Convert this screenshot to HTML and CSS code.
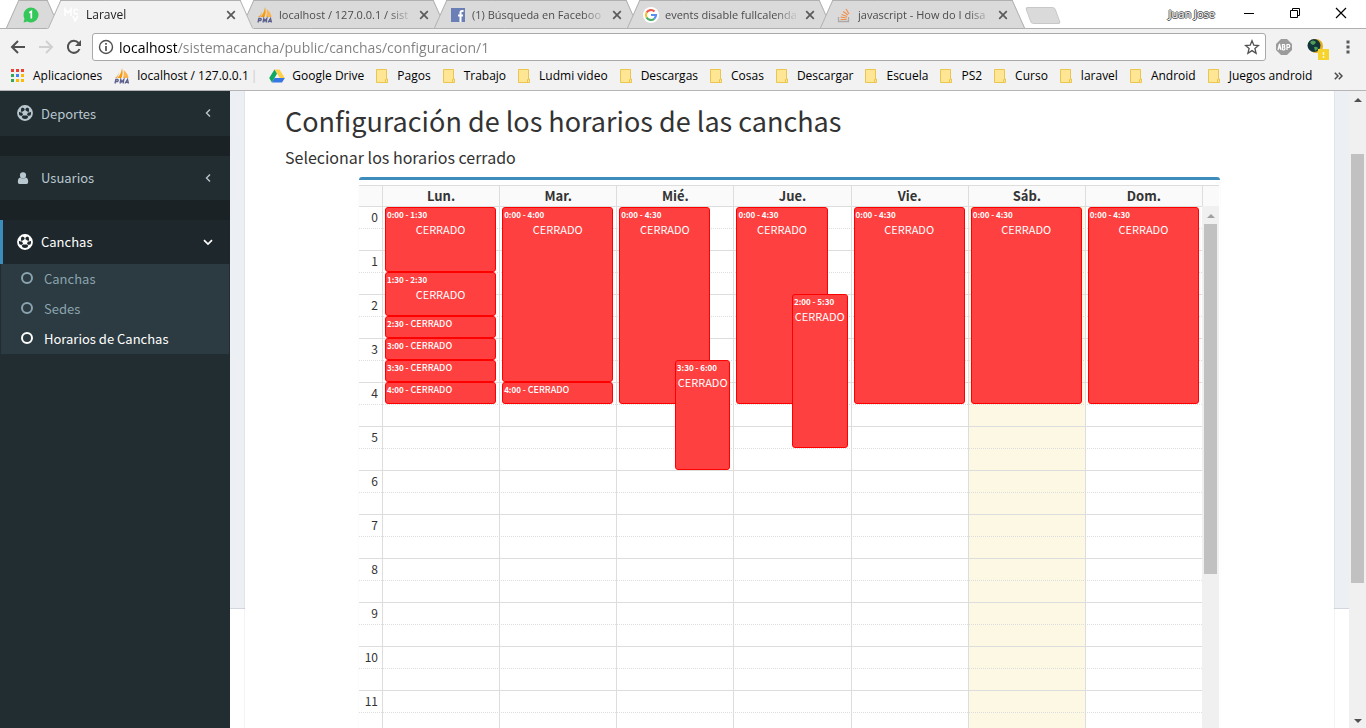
FILE: index.html
```html
<!DOCTYPE html>
<html lang="es">
<head>
<meta charset="utf-8">
<title>Laravel</title>
<link rel="stylesheet" href="styles.css">
</head>
<body>
<svg class="defs" aria-hidden="true">
  <symbol id="ball" viewBox="0 0 16 16">
    <circle cx="8" cy="8" r="7" fill="none" stroke="currentColor" stroke-width="1.800"/>
    <path fill="currentColor" d="M8 5l3 2.100-1.200 3.500H6.200L5 7.100zM4.500 1.500L8 4l3.500-2.500L8 .6zM1 6.500L3.700 7.400l.5-4L2.600 3zM15 6.500l-2.700.9-.5-4L13.400 3zM1.200 10.500l3.300.3 1.300 3.400-1.800.3zM14.800 10.500l-3.300.3-1.300 3.400 1.800.3z"/>
    <path stroke="currentColor" stroke-width=".8" d="M8 3v3M3.300 6.800l2.500.6M12.700 6.800l-2.500.6M4.300 11.500l2-1.500M11.700 11.500l-2-1.500"/>
  </symbol>
  <symbol id="x" viewBox="0 0 10 10"><path d="M1.200 1.200l7.600 7.600M8.800 1.200L1.200 8.800" stroke="#5a5a5a" stroke-width="1.700"/></symbol>
  <symbol id="pma" viewBox="0 0 16 16">
    <path fill="#f89c0e" d="M8 0c1 4 .8 7-.5 10H3.500C6 7 7.500 4 8 0z"/><path fill="#fbb450" d="M9.500 2c3 2 4.800 5 5 8H9c1-3 1-5 .5-8z"/><path fill="#e9a04c" d="M4.500 4C4.500 7 3 9 .8 10H3c1-1.500 1.800-3.500 1.500-6z"/>
    <path d="M1 15.500l.8-4h2q1 1-.2 2H1.500M6 15.500l.8-4 1 2.500 2-2.500-.6 4M11 15.500l2.500-4 1 4M12 14.300h2" fill="none" stroke="#5b5f8d" stroke-width="1.300"/>
  </symbol>
  <symbol id="folder" viewBox="0 0 12 14"><path d="M.5.500h10v9.500h1v3.500H.5z" fill="#ffe694" stroke="#eac54f"/><path d="M9.500 13.500v-3h1" fill="none" stroke="#eac54f"/></symbol>
</svg>

<header class="browser">
  <div class="tabstrip">
    <button class="tab tab-pinned" aria-label="WhatsApp">
      <svg class="fav" viewBox="0 0 16 16"><path fill="#34c759" d="M8 .5a7.500 7.500 0 1 1-3.600 14.100L.5 15.500l1-3.800A7.500 7.500 0 0 1 8 .5z"/><path d="M6.300 5.800L8.300 4.500V11.500" fill="none" stroke="#fff" stroke-width="1.700"/></svg>
    </button>
    <button class="tab tab-active">
      <svg class="fav" viewBox="0 0 16 16"><path d="M1 9V2l3 4 3-4v7M14 3q-4-2-4 1.500t4 2M9 9l2 5 3-5" fill="none" stroke="#fff" stroke-width="1.500"/></svg>
      <span class="tab-title">Laravel</span><svg class="close"><use href="#x"/></svg>
    </button>
    <button class="tab">
      <svg class="fav"><use href="#pma"/></svg>
      <span class="tab-title">localhost / 127.0.0.1 / sist</span><svg class="close"><use href="#x"/></svg>
    </button>
    <button class="tab">
      <svg class="fav" viewBox="0 0 16 16"><path fill="#6a7fb5" d="M1 1h14v14H1z"/><path d="M13.500 4H12q-1.500 0-1.500 1.500V15M8 8.500h5" fill="none" stroke="#fff" stroke-width="2"/></svg>
      <span class="tab-title">(1) Búsqueda en Faceboo</span><svg class="close"><use href="#x"/></svg>
    </button>
    <button class="tab">
      <svg class="fav" viewBox="0 0 16 16"><circle cx="8" cy="8" r="8" fill="#fff"/><g fill="none" stroke-width="2.200"><path stroke="#ea5a4d" d="M3.600 5.500A5 5 0 0 1 11.500 4.500"/><path stroke="#f6c033" d="M3.600 5.500a5 5 0 0 0 0 5"/><path stroke="#4cae68" d="M3.600 10.500a5 5 0 0 0 7.700 1.200"/><path stroke="#5b8ff0" d="M11.300 11.700A5 5 0 0 0 13 8H8"/></g></svg>
      <span class="tab-title">events disable fullcalenda</span><svg class="close"><use href="#x"/></svg>
    </button>
    <button class="tab">
      <svg class="fav" viewBox="0 0 16 16"><path d="M2.500 10v4.500h10V10" fill="none" stroke="#aaa" stroke-width="1.300"/><path d="M4.500 12.500h6M4.700 10.200l6 .8M5.500 7.500l5.600 2M7.200 4.500l4.700 3.600M10 2l3 5" stroke="#f2904c" stroke-width="1.200"/></svg>
      <span class="tab-title">javascript - How do I disa</span><svg class="close"><use href="#x"/></svg>
    </button>
    <button class="new-tab" aria-label="Nueva pestaña"></button>
    <div class="window-controls">
      <span class="profile">Juan Jose</span>
      <button aria-label="Minimizar"><svg viewBox="0 0 12 12"><path d="M1 6.500h10" stroke="#000"/></svg></button>
      <button aria-label="Restaurar"><svg viewBox="0 0 12 12"><path d="M1.500 3.500h7v7h-7zM3.500 3V1.500h7v7H9" fill="none" stroke="#000"/></svg></button>
      <button aria-label="Cerrar"><svg viewBox="0 0 12 12"><path d="M1 1l10 10M11 1L1 11" stroke="#000" stroke-width="1.200"/></svg></button>
    </div>
  </div>
  <div class="toolbar">
    <button class="tool" aria-label="Atrás"><svg viewBox="0 0 16 16"><path d="M15 8H2M8 2L2 8l6 6" fill="none" stroke="#505050" stroke-width="2"/></svg></button>
    <button class="tool" aria-label="Adelante"><svg viewBox="0 0 16 16"><path d="M1 8h13M8 2l6 6-6 6" fill="none" stroke="#d0d0d0" stroke-width="2"/></svg></button>
    <button class="tool" aria-label="Recargar"><svg viewBox="0 0 16 16"><path d="M13.500 10A6 6 0 1 1 12.500 4" fill="none" stroke="#505050" stroke-width="2"/><path d="M15 1v6H9z" fill="#505050"/></svg></button>
    <div class="omnibox">
      <svg viewBox="0 0 16 16"><circle cx="8" cy="8" r="6.500" fill="none" stroke="#505050" stroke-width="1.400"/><path d="M8 7v5M8 4v1.800" stroke="#505050" stroke-width="1.700"/></svg>
      <input class="url" type="text" aria-label="Dirección" value="localhost/sistemacancha/public/canchas/configuracion/1">
      <svg viewBox="0 0 16 16"><path d="M8 1.800l1.800 4.400 4.700.3-3.600 3 1.200 4.700L8 11.600l-4.100 2.600 1.200-4.700-3.600-3 4.700-.3z" fill="none" stroke="#505050" stroke-width="1.300"/></svg>
    </div>
    <button class="ext" aria-label="ABP"><svg viewBox="0 0 18 18"><path d="M6 1h6l5 5v6l-5 5H6l-5-5V6z" fill="#9b9b9b"/><path d="M3 12l1.500-6L6 12M3.500 10h2M7.500 12V6.500h1.500q1.500 1.200 0 2.500 2 1.500 0 3H7.500M12 12V6.500h2q1.500 1.500 0 3h-2" fill="none" stroke="#fff" stroke-width="1.200"/></svg></button>
    <button class="ext ext-wide" aria-label="Descargas"><svg viewBox="0 0 22 22"><circle cx="9" cy="8" r="7" fill="#e3ad1f"/><circle cx="7" cy="7.500" r="6.500" fill="#12343b"/><path d="M3 4q3-3 6 0-1 3-3 3t-3-3zM7 9q4-1 4 2l-3 2z" fill="#4e9b54"/><path d="M11 11h11v11H11z" fill="#f6d32d"/><path d="M16.500 14v3M16.500 18v2" stroke="#fff6c9" stroke-width="1.500"/></svg></button>
    <button class="menu" aria-label="Menú"><svg viewBox="0 0 4 14"><path d="M.5.500h3v3h-3zM.5 5.500h3v3h-3zM.5 10.500h3v3h-3z" fill="#5a5a5a"/></svg></button>
  </div>
  <nav class="bookmarks">
    <a href="#"><svg class="apps" viewBox="0 0 13 13"><path fill="#ea4335" d="M0 0h3v3H0zM5 0h3v3H5zM10 0h3v3h-3z"/><path fill="#34a853" d="M0 5h3v3H0zM0 10h3v3H0z"/><path fill="#4285f4" d="M5 5h3v3H5z"/><path fill="#fbbc05" d="M10 5h3v3h-3zM5 10h3v3H5zM10 10h3v3h-3z"/></svg>Aplicaciones</a>
    <a class="tight" href="#"><svg class="site"><use href="#pma"/></svg>localhost / 127.0.0.1<span class="cut">|</span></a>
    <a class="tight" href="#"><svg class="site" viewBox="0 0 16 16"><path fill="#ffcf48" d="M5.500 1.500h5L15.800 10h-5z"/><path fill="#11a861" d="M5.500 1.500L8 5.700 2.900 14.500.2 10z"/><path fill="#3777e3" d="M5.500 10h10.300L13 14.500H2.900z"/></svg>Google Drive</a>
    <a href="#"><svg class="folder"><use href="#folder"/></svg>Pagos</a>
    <a href="#"><svg class="folder"><use href="#folder"/></svg>Trabajo</a>
    <a href="#"><svg class="folder"><use href="#folder"/></svg>Ludmi video</a>
    <a href="#"><svg class="folder"><use href="#folder"/></svg>Descargas</a>
    <a href="#"><svg class="folder"><use href="#folder"/></svg>Cosas</a>
    <a href="#"><svg class="folder"><use href="#folder"/></svg>Descargar</a>
    <a href="#"><svg class="folder"><use href="#folder"/></svg>Escuela</a>
    <a href="#"><svg class="folder"><use href="#folder"/></svg>PS2</a>
    <a href="#"><svg class="folder"><use href="#folder"/></svg>Curso</a>
    <a href="#"><svg class="folder"><use href="#folder"/></svg>laravel</a>
    <a href="#"><svg class="folder"><use href="#folder"/></svg>Android</a>
    <a href="#"><svg class="folder"><use href="#folder"/></svg>Juegos android</a>
    <button class="more" aria-label="Más marcadores"><svg viewBox="0 0 9 8"><path d="M.8.800L4 4 .8 7.200M4.800.800L8 4 4.800 7.200" fill="none" stroke="#4a4a4a" stroke-width="1.500"/></svg></button>
  </nav>
</header>

<div class="page">
  <aside class="sidebar">
    <ul class="nav">
      <li><a class="nav-link" href="#"><svg class="nav-icon"><use href="#ball"/></svg>Deportes<svg class="arrow" viewBox="0 0 8 10"><path d="M6 1.500L2.500 5 6 8.500" fill="none" stroke="currentColor" stroke-width="1.400"/></svg></a></li>
      <li class="spacer"></li>
      <li><a class="nav-link" href="#"><svg class="nav-icon" viewBox="0 0 16 16"><path fill="currentColor" d="M6 2.200a3 3 0 0 1 0 6.200 3 3 0 0 1 0-6.200zM3.300 7.500q2.700 2.400 5.400 0 2.500.3 2.500 4.500 0 2-1.700 2h-7Q.8 14 .8 12q0-4.200 2.500-4.500z"/></svg>Usuarios<svg class="arrow" viewBox="0 0 8 10"><path d="M6 1.500L2.500 5 6 8.500" fill="none" stroke="currentColor" stroke-width="1.400"/></svg></a></li>
      <li class="spacer"></li>
      <li>
        <a class="nav-link nav-active" href="#"><svg class="nav-icon"><use href="#ball"/></svg>Canchas<svg class="arrow" viewBox="0 0 10 10"><path d="M1 3.200L5 7l4-3.800" fill="none" stroke="currentColor" stroke-width="1.700"/></svg></a>
        <ul class="subnav">
          <li><a href="#"><i class="ring"></i>Canchas</a></li>
          <li><a href="#"><i class="ring"></i>Sedes</a></li>
          <li><a class="current" href="#"><i class="ring"></i>Horarios de Canchas</a></li>
        </ul>
      </li>
    </ul>
  </aside>

  <main class="content">
    <section class="panel">
      <h1>Configuración de los horarios de las canchas</h1>
      <h2>Selecionar los horarios cerrado</h2>
      <div class="calendar">
        <table class="head">
          <tr><th class="axis"></th><th>Lun.</th><th>Mar.</th><th>Mié.</th><th>Jue.</th><th>Vie.</th><th>Sáb.</th><th>Dom.</th><th class="gutter"></th></tr>
        </table>
        <div class="body">
          <div class="grid">
            <table class="slots">
              <tr><th>0</th><td></td></tr><tr><th></th><td></td></tr>
              <tr><th>1</th><td></td></tr><tr><th></th><td></td></tr>
              <tr><th>2</th><td></td></tr><tr><th></th><td></td></tr>
              <tr><th>3</th><td></td></tr><tr><th></th><td></td></tr>
              <tr><th>4</th><td></td></tr><tr><th></th><td></td></tr>
              <tr><th>5</th><td></td></tr><tr><th></th><td></td></tr>
              <tr><th>6</th><td></td></tr><tr><th></th><td></td></tr>
              <tr><th>7</th><td></td></tr><tr><th></th><td></td></tr>
              <tr><th>8</th><td></td></tr><tr><th></th><td></td></tr>
              <tr><th>9</th><td></td></tr><tr><th></th><td></td></tr>
              <tr><th>10</th><td></td></tr><tr><th></th><td></td></tr>
              <tr><th>11</th><td></td></tr><tr><th></th><td></td></tr>
            </table>
            <div class="days">
              <div class="day">
                <a class="event" style="grid-row:1/4"><span>0:00 - 1:30</span><b>CERRADO</b></a>
                <a class="event" style="grid-row:4/6"><span>1:30 - 2:30</span><b>CERRADO</b></a>
                <a class="event short" style="grid-row:6/7"><span>2:30 - </span><b>CERRADO</b></a>
                <a class="event short" style="grid-row:7/8"><span>3:00 - </span><b>CERRADO</b></a>
                <a class="event short" style="grid-row:8/9"><span>3:30 - </span><b>CERRADO</b></a>
                <a class="event short" style="grid-row:9/10"><span>4:00 - </span><b>CERRADO</b></a>
              </div>
              <div class="day">
                <a class="event" style="grid-row:1/9"><span>0:00 - 4:00</span><b>CERRADO</b></a>
                <a class="event short" style="grid-row:9/10"><span>4:00 - </span><b>CERRADO</b></a>
              </div>
              <div class="day">
                <a class="event under" style="grid-row:1/10"><span>0:00 - 4:30</span><b>CERRADO</b></a>
                <a class="event over" style="grid-row:8/13"><span>3:30 - 6:00</span><b>CERRADO</b></a>
              </div>
              <div class="day">
                <a class="event under" style="grid-row:1/10"><span>0:00 - 4:30</span><b>CERRADO</b></a>
                <a class="event over" style="grid-row:5/12"><span>2:00 - 5:30</span><b>CERRADO</b></a>
              </div>
              <div class="day"><a class="event" style="grid-row:1/10"><span>0:00 - 4:30</span><b>CERRADO</b></a></div>
              <div class="day today"><a class="event" style="grid-row:1/10"><span>0:00 - 4:30</span><b>CERRADO</b></a></div>
              <div class="day"><a class="event" style="grid-row:1/10"><span>0:00 - 4:30</span><b>CERRADO</b></a></div>
            </div>
          </div>
          <div class="scrollbar scrollbar-inner"><i class="up"></i><i class="thumb"></i></div>
        </div>
      </div>
    </section>
  </main>
  <div class="scrollbar scrollbar-page"><i class="up"></i><i class="thumb"></i><i class="down"></i></div>
</div>
</body>
</html>
```
FILE: styles.css
```css
* { box-sizing: border-box; }
body { margin: 0; height: 100vh; display: flex; flex-direction: column; overflow: hidden; background: #fff; font-family: "Noto Sans CJK SC", "Noto Sans", sans-serif; font-size: 13px; color: #333; }
button { border: 0; padding: 0; background: none; font: inherit; color: inherit; }
a { color: inherit; text-decoration: none; }
ul { list-style: none; margin: 0; padding: 0; }
.defs { position: absolute; width: 0; height: 0; }

/* Browser frame */
.browser { flex: none; background: #f2f2f2; border-bottom: 1px solid #b6b4b6; font-family: "Open Sans", "Noto Sans", sans-serif; font-size: 12px; color: #000; }
.tabstrip { display: flex; height: 29px; padding-left: 12px; background: #fff; border-bottom: 1px solid #b0b0b0; }
.tab { position: relative; z-index: 0; flex: 0 1 193px; min-width: 0; height: 29px; display: flex; align-items: center; padding: 0 11px 0 10px; font-size: 11px; color: #4c4c4c; text-align: left; }
.tab::before, .tab::after { content: ""; position: absolute; z-index: -1; top: 0; bottom: 0; background: #dadada; border-top: 1px solid #b0b0b0; border-bottom: 1px solid #b0b0b0; }
.tab::before { left: 0; right: 30%; border-left: 1px solid #b0b0b0; transform: skewX(-24deg); }
.tab::after { left: 30%; right: 0; border-right: 1px solid #b0b0b0; transform: skewX(24deg); }
.tab-pinned { flex-basis: 42px; padding-left: 11px; }
.tab-active { z-index: 1; font-size: 12px; color: #222; }
.tab-active::before, .tab-active::after { background: #f2f2f2; border-bottom-color: #f2f2f2; }
.fav { flex: none; width: 16px; height: 16px; margin-right: 6px; }
.tab-title { flex: 1; min-width: 0; white-space: nowrap; -webkit-mask-image: linear-gradient(to left, transparent, #000 24px); mask-image: linear-gradient(to left, transparent, #000 24px); }
.close { flex: none; width: 10px; height: 10px; margin-left: 6px; }
.new-tab { width: 30px; height: 17px; margin: 7px 0 0 9px; background: #dadada; border: 1px solid #c8c8c8; border-radius: 3px; transform: skewX(20deg); }
.window-controls { margin-left: auto; display: flex; align-items: center; gap: 34px; padding: 0 19px 2px 0; }
.window-controls svg { display: block; width: 12px; height: 12px; }
.profile { font-size: 11px; color: #fff; text-shadow: 1px 0 #555, -1px 0 #555, 0 1px #555, 0 -1px #555; margin-right: -6px; }
.toolbar { display: flex; align-items: center; height: 36px; padding: 0 10px; }
.tool { flex: none; width: 28px; height: 28px; }
.tool svg { display: block; width: 16px; height: 16px; }
.omnibox { flex: 1; display: flex; align-items: center; height: 28px; padding: 0 5px; margin-left: -2px; background: #fff; border: 1px solid #a9a9a9; border-radius: 3px; }
.omnibox svg { flex: none; width: 16px; height: 16px; }
.url { flex: 1; border: 0; outline: 0; padding: 0 5px; font: 14px "Open Sans", sans-serif; -webkit-text-fill-color: transparent; background: linear-gradient(90deg, #000 63px, #808080 63px); -webkit-background-clip: text; background-clip: text; }
.ext { flex: none; width: 18px; height: 18px; margin-left: 9px; }
.ext svg { display: block; width: 100%; height: 100%; }
.ext-wide { width: 22px; height: 22px; margin: 4px 0 0 14px; }
.menu { flex: none; width: 4px; height: 14px; margin: 0 6px 0 17px; }
.menu svg { display: block; width: 4px; height: 14px; }
.bookmarks { display: flex; align-items: center; height: 25px; padding: 0 23px 4px 11px; gap: 12px; white-space: nowrap; overflow: hidden; }
.bookmarks a { display: flex; align-items: center; gap: 9px; }
.bookmarks .tight { gap: 7px; }
.apps { width: 13px; height: 13px; }
.site { width: 16px; height: 16px; }
.folder { width: 12px; height: 14px; }
.cut { color: #ccc; margin-left: -5px; }
.more { margin-left: auto; }
.more svg { display: block; width: 9px; height: 8px; }

/* Application */
.page { flex: 1; min-height: 0; display: flex; overflow: hidden; }
.sidebar { flex: none; width: 230px; background: #222d32; color: #b8c7ce; }
.spacer { height: 20px; background: #1a2226; }
.nav-link { display: flex; align-items: center; height: 44px; padding: 0 17px 1px 14px; border-left: 3px solid transparent; }
.nav-active { color: #fff; background: #1e282c; border-left-color: #3c8dbc; }
.nav li:first-child > .nav-link { height: 45px; }
.nav-icon { width: 16px; height: 16px; margin-right: 8px; }
.arrow { width: 10px; height: 10px; margin-left: auto; }
.subnav { margin: 0 1px; background: #2c3b41; color: #8aa4af; }
.nav .subnav a { display: flex; align-items: center; height: 30px; padding: 0 0 2px 20px; }
.ring { width: 12px; height: 12px; margin-right: 11px; border: 2px solid; border-radius: 50%; }
.subnav .current { color: #fff; }
.content { flex: 1; min-width: 0; height: 518px; padding: 0 15px; background: #ecf0f5; border-bottom: 1px solid #d2d6de; }
.panel { padding: 10px 40px 0; background: #fff; box-shadow: 0 0 1px rgba(0, 0, 0, .25); }
h1 { margin: 0; font-weight: 400; font-size: 27px; line-height: 40px; }
h2 { margin: 6px 0 0; font-weight: 400; font-size: 16px; line-height: 20px; }
.calendar { margin: 10px 74px 0; padding: 5px 1px 0 0; border-top: 3px solid #3c8dbc; border-radius: 3px 3px 0 0; box-shadow: 0 1px 1px rgba(0, 0, 0, .12); }
table { width: 100%; table-layout: fixed; border-spacing: 0; }
th, td { padding: 0; }
.head th { height: 21px; background: #fafafa; border: solid #ddd; border-width: 1px 0 0 1px; font-size: 13px; line-height: 20px; }
.head .axis { width: 23px; border-left: 0; }
.head .gutter { width: 17px; }
.body { display: flex; }
.grid { position: relative; flex: 1; min-width: 0; }
.slots { position: relative; z-index: 1; }
.slots th, .slots td { height: 22px; border-top: 1px solid #ddd; }
.slots tr:nth-child(even) > * { border-top-style: dotted; }
.slots th { width: 23px; padding: 0 4px 2px 0; text-align: right; font-weight: 400; font-size: 12px; line-height: 18px; }
.days { position: absolute; inset: 0 0 0 23px; display: grid; grid-template-columns: repeat(7, 1fr); }
.day { display: grid; grid-template-columns: 1fr; grid-template-rows: repeat(24, 22px); padding: 0 3px 0 2px; border-left: 1px solid #ddd; }
.today { background: #fcf8e3; }
.event { position: relative; z-index: 2; grid-column: 1; min-width: 0; overflow: hidden; padding: 0 1px; background: #ff4040; border: 1px solid #f00; border-radius: 3px; color: #fff; white-space: nowrap; }
.event:first-child { margin-top: 1px; }
.event span { display: block; font-size: 8px; line-height: 14px; font-weight: 700; }
.event b { display: block; text-align: center; font-weight: 400; font-size: 11px; line-height: 15px; }
.event.short { display: flex; gap: 2px; }
.event.short b { font-size: 9px; line-height: 14px; font-weight: 500; }
.under { margin-right: 18%; }
.over { margin-left: 50%; }

/* Scroll bars */
.scrollbar { flex: none; width: 17px; display: flex; flex-direction: column; align-items: center; background: #f0f0f0; }
.scrollbar i { flex: none; }
.up, .down { width: 0; height: 0; border: solid transparent; border-width: 0 4px; }
.up { border-bottom: 4px solid #a0a0a0; }
.down { border-top: 4px solid #505050; margin: auto 0 5px; }
.thumb { width: 13px; background: #c1c1c1; }
.scrollbar-inner .up { margin: 8px 0 6px; }
.scrollbar-inner .thumb { height: 350px; }
.scrollbar-page .up { margin: 7px 0 52px; border-bottom-color: #505050; }
.scrollbar-page .thumb { height: 429px; }
```
